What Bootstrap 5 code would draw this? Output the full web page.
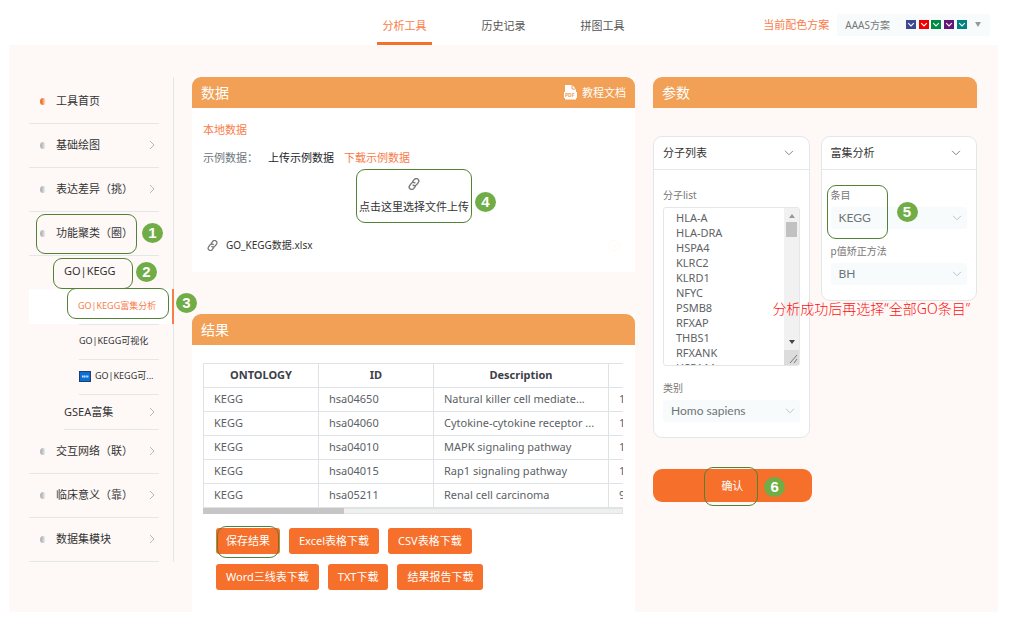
<!DOCTYPE html>
<html lang="zh-CN">
<head>
<meta charset="utf-8">
<meta name="viewport" content="width=device-width, initial-scale=1">
<title>GO|KEGG富集分析</title>
<link rel="stylesheet" href="https://cdn.jsdelivr.net/npm/bootstrap@5.3.0/dist/css/bootstrap.min.css">
<style>
:root{--brand:#f66f2b;--head:#f1a055;--hot:#f97c4a;--line:#e4e7ea;--soft:#f7fbfc;--mark-green:#538135}
body{font-family:"Noto Sans","Noto Sans CJK SC",sans-serif;font-size:11px;line-height:16px;color:#333;background:#fff}
a{color:inherit;text-decoration:none}
.shell{padding:0 12px 15px 9px}
.topbar{display:grid;grid-template-columns:1fr auto 1fr;height:45px}
.topnav{grid-column:2;gap:44px;color:#555}
.topnav a{width:55px;padding-top:18px;text-align:center;border-bottom:3px solid transparent}
.topnav a.active{color:var(--hot);border-color:var(--brand)}
.hot{color:var(--hot)}
.scheme{height:22px;padding:0 9px 0 8px;border:0;background:var(--soft);color:#777;font-size:10px;line-height:16px}
.workspace{display:grid;grid-template-columns:145px minmax(0,443fr) minmax(0,324fr);column-gap:18px;padding:32px 21px 0 20px;background:#fef9f7}
.side{padding-top:3px;border-right:1px solid var(--line);align-self:start}
.side li{margin-right:14px;border-bottom:1px solid var(--line);position:relative;white-space:nowrap}
.side li>a{display:flex;align-items:center;height:43px;padding:0 4px 1px 11px}
.side li>a>span{flex:1}
.dot{width:6px;height:7px;border-radius:50%;margin-right:10px;background:linear-gradient(90deg,#b4b8bc 30%,#fff)}
.dot.on{background:linear-gradient(90deg,#f2702e 30%,#fff)}
.side li.sub1{margin-left:35px}
.side li.sub1>a{height:34px;padding-left:0}
.side li.group{border:0}
.side li.group>a{height:33px;padding-bottom:3px}
.side li.sub2{margin-left:50px;font-size:9px}
.side li.sub2>a{height:34px;padding:0 0 2px}
.side li.current{margin:0 -1px 0 0;border:0;border-right:2px solid var(--hot);background:#fff;font-size:9px;color:var(--hot)}
.side li.current>a{height:35px;padding:0 0 1px 49px}
.side li.current+li{border-top:1px solid var(--line)}
.ring{position:absolute;border:1px solid var(--mark-green);border-radius:9px;pointer-events:none;z-index:2}
.num{position:absolute;width:21px;height:20px;border-radius:50%;background:#70ad47;color:#fff;font:bold 15px/20px "Liberation Sans",sans-serif;text-align:center;z-index:3;pointer-events:none}
.bar{height:31px;padding:0 9px;border-radius:9px 9px 0 0;background:var(--head);color:#fff}
.bar h2{font-size:14px;line-height:20px;font-weight:400;margin:0}
.panel{background:#fff}
.files{height:164px;padding:14px 11px}
.samples{gap:10px;margin-top:12px}
.drop{border:0;background:none;width:116px;height:54px;padding:5px 0;line-height:16px;font-size:11px;color:#333;position:relative;margin:3px 0 0 153px;white-space:nowrap}
.drop svg{display:block;margin:0 auto 9px}
.filerow{margin-top:14px;font-size:10px}
.results{padding:18px 12px 22px 11px}
.results-panel{margin-top:42px;box-shadow:0 -42px #fef9f7}
.sheet{width:521px;table-layout:fixed;margin:0;border-color:#dfe3e8;font-size:11px;line-height:16px}
.sheet>:not(caption)>*>*{padding:3px 10px 4px;white-space:nowrap;color:#5c5f66}
.sheet>thead>tr>th{text-align:center;color:#3c4048;font-weight:700}
.sheet col.term{width:175px}
.sheet col.key{width:115px}
.hscroll{height:6px;background:#eef0f0;border:1px solid #e2e2e2}
.hscroll div{width:141px;height:6px;margin:-1px;background:#c6c6c6}
.downloads{padding:14px 13px 0;column-gap:9px;row-gap:10px;max-width:310px}
.btn-brand{--bs-btn-color:#fff;--bs-btn-bg:var(--brand);--bs-btn-hover-bg:#e8621e;--bs-btn-hover-color:#fff;border:0;padding:5px 10px;font-size:11px;line-height:16px;border-radius:3px;position:relative}
.pcards{display:grid;grid-template-columns:1fr 1fr;column-gap:11px;align-items:start;margin-top:28px;position:relative}
.pcard{border:1px solid var(--line);border-radius:9px;background:#fff;padding-bottom:15px}
.pcard h3{font-size:11px;line-height:16px;font-weight:400;margin:0;padding:8px 15px 8px 9px;border-bottom:1px solid var(--line)}
.fields{padding:17px 9px 0;position:relative}
.fields label{display:block;font-size:10px;line-height:16px;color:#777;margin-bottom:4px}
.fields label.next{margin-top:14px}
.genes{display:block;width:100%;height:159px;padding:2px 16px 0 12px;border:1px solid var(--line);border-radius:3px;resize:none;overflow:hidden;font-size:11px;line-height:15px;color:#606266}
.vs{position:absolute;right:0;top:0}
.pick{appearance:none;width:100%;height:22px;padding:0 8px;border:0;border-radius:3px;background:var(--soft);color:#707478;font-family:Lato,"Noto Sans CJK SC",sans-serif;font-size:12px;line-height:20px}
.pickbox{position:relative}
.pickbox svg{position:absolute;right:5px;top:8px;pointer-events:none}
.confirm{width:49%;height:33px;margin-top:31px;border-radius:9px}
.note{position:absolute;right:7px;top:163px;margin:0;font-size:14px;line-height:20px;font-weight:300;color:#ff1010;white-space:nowrap}
</style>
</head>
<body>
<svg width="0" height="0" class="position-absolute">
<symbol id="right" viewBox="0 0 6 10"><path d="M1 1l4 4-4 4" fill="none" stroke="#b4b8bc"/></symbol>
<symbol id="down" viewBox="0 0 10 6"><path d="M1 .8l4 4 4-4" fill="none" stroke="currentColor"/></symbol>
<symbol id="chain" viewBox="0 0 24 24"><g fill="none" stroke="#777" stroke-width="2.8" stroke-linecap="round" transform="rotate(-8 12 12)"><path d="M10 14a5 5 0 0 0 7.1 0l4-4A5 5 0 0 0 14 3l-4 4"/><path d="M14 10a5 5 0 0 0-7.1 0l-4 4A5 5 0 0 0 10 21l4-4"/></g></symbol>
<symbol id="tick" viewBox="0 0 10 10"><path d="M2.2 3.2L5 6l2.800-2.800" fill="none" stroke="#fff" stroke-width="1.100"/></symbol>
</svg>
<div class="shell container-fluid">
<header class="topbar">
<nav class="topnav d-flex">
<a class="active" href="#">分析工具</a><a href="#">历史记录</a><a href="#">拼图工具</a>
</nav>
<div class="d-flex align-items-center justify-content-end pe-2 pb-1 pt-2">
<span class="hot me-2">当前配色方案</span>
<button class="scheme d-flex align-items-center" type="button">AAAS方案
<svg class="ms-3" width="61" height="10"><g shape-rendering="crispEdges"><rect width="10" height="9" fill="#3b4992"/><rect x="13" width="10" height="9" fill="#ee0000"/><rect x="25" width="10" height="9" fill="#008b45"/><rect x="38" width="10" height="9" fill="#631879"/><rect x="51" width="10" height="9" fill="#008280"/></g><use href="#tick" width="10" height="10"/><use href="#tick" x="13" width="10" height="10"/><use href="#tick" x="25" width="10" height="10"/><use href="#tick" x="38" width="10" height="10"/><use href="#tick" x="51" width="10" height="10"/></svg>
<svg class="ms-2" width="6" height="5"><path d="M0 0h6L3 5z" fill="#999"/></svg></button>
</div>
</header>
<main class="workspace">
<aside class="side">
<ul class="list-unstyled m-0">
<li><a href="#"><i class="dot on"></i><span>工具首页</span></a></li>
<li><a href="#"><i class="dot"></i><span>基础绘图</span><svg width="6" height="10"><use href="#right"/></svg></a></li>
<li><a href="#"><i class="dot"></i><span>表达差异（挑）</span><svg width="6" height="10"><use href="#right"/></svg></a></li>
<li><a href="#"><i class="dot"></i><span>功能聚类（圈）</span></a><div class="ring" style="left:7px;top:2px;width:101px;height:40px"></div><b class="num" style="left:113px;top:11px">1</b></li>
<li class="sub1 group"><a href="#"><span>GO|KEGG</span></a><div class="ring" style="left:-11px;top:2px;width:80px;height:31px"></div><b class="num" style="left:72px;top:6px">2</b></li>
<li class="current"><a href="#"><span>GO|KEGG富集分析</span></a><div class="ring" style="left:38px;top:-1px;width:102px;height:31px"></div><b class="num" style="left:147px;top:4px">3</b></li>
<li class="sub2"><a href="#"><span>GO|KEGG可视化</span></a></li>
<li class="sub2"><a href="#"><svg class="me-1" width="12" height="11"><rect x=".5" y=".5" width="11" height="10" fill="#0b6fd3" stroke="#1e3f66"/><path d="M3 5.500h6.500" stroke="#cfe6ff" stroke-width="2" stroke-dasharray="1.300 .4"/></svg><span>GO|KEGG可...</span></a></li>
<li class="sub1"><a href="#"><span>GSEA富集</span><svg width="6" height="10"><use href="#right"/></svg></a></li>
<li><a href="#"><i class="dot"></i><span>交互网络（联）</span><svg width="6" height="10"><use href="#right"/></svg></a></li>
<li><a href="#"><i class="dot"></i><span>临床意义（靠）</span><svg width="6" height="10"><use href="#right"/></svg></a></li>
<li><a href="#"><i class="dot"></i><span>数据集模块</span><svg width="6" height="10"><use href="#right"/></svg></a></li>
</ul>
</aside>
<div class="d-flex flex-column">
<section class="panel">
<div class="bar d-flex align-items-center justify-content-between"><h2>数据</h2>
<a href="#" class="d-flex align-items-center gap-1"><svg width="15" height="15" viewBox="0 0 15 15"><path d="M2 0h7l4 4v10.500H2z" fill="#fff"/><path d="M9 0v4h4" fill="none" stroke="#f1a055"/><rect x="1" y="7" width="13" height="6" fill="#fff"/><text x="2" y="12" font-size="5" font-weight="bold" fill="#f1a055">PDF</text></svg>教程文档</a></div>
<div class="files">
<div class="hot">本地数据</div>
<div class="samples d-flex"><span class="text-secondary">示例数据：</span><a href="#" class="text-dark">上传示例数据</a><a href="#" class="hot">下载示例数据</a></div>
<button type="button" class="drop"><svg width="12" height="12"><use href="#chain"/></svg>点击这里选择文件上传<span class="ring" style="inset:0"></span><b class="num" style="right:-24px;top:23px">4</b></button>
<div class="filerow d-flex align-items-center"><svg class="ms-1 me-2" width="11" height="11"><use href="#chain"/></svg>GO_KEGG数据.xlsx
<svg class="ms-auto me-1" width="11" height="11" fill="none" stroke="#fff8f4"><circle cx="5.500" cy="5.500" r="5"/><path d="M3 5.500l2 2 3-4"/></svg></div>
</div>
</section>
<section class="panel results-panel flex-grow-1">
<div class="bar d-flex align-items-center"><h2>结果</h2></div>
<div class="results">
<div class="overflow-hidden">
<table class="table table-bordered sheet">
<colgroup><col class="key"><col class="key"><col class="term"><col></colgroup>
<thead><tr><th>ONTOLOGY</th><th>ID</th><th>Description</th><th></th></tr></thead>
<tbody>
<tr><td>KEGG</td><td>hsa04650</td><td>Natural killer cell mediate...</td><td>1</td></tr>
<tr><td>KEGG</td><td>hsa04060</td><td>Cytokine-cytokine receptor ...</td><td>1</td></tr>
<tr><td>KEGG</td><td>hsa04010</td><td>MAPK signaling pathway</td><td>1</td></tr>
<tr><td>KEGG</td><td>hsa04015</td><td>Rap1 signaling pathway</td><td>1</td></tr>
<tr><td>KEGG</td><td>hsa05211</td><td>Renal cell carcinoma</td><td>9</td></tr>
</tbody></table></div>
<div class="hscroll"><div></div></div>
<div class="downloads d-flex flex-wrap">
<button type="button" class="btn btn-brand">保存结果<span class="ring" style="inset:-2px 1px -4px 1px"></span></button>
<button type="button" class="btn btn-brand">Excel表格下载</button>
<button type="button" class="btn btn-brand">CSV表格下载</button>
<button type="button" class="btn btn-brand">Word三线表下载</button>
<button type="button" class="btn btn-brand">TXT下载</button>
<button type="button" class="btn btn-brand">结果报告下载</button>
</div>
</div>
</section>
</div>
<section>
<div class="bar d-flex align-items-center"><h2>参数</h2></div>
<div class="pcards">
<div class="pcard">
<h3 class="d-flex justify-content-between align-items-center">分子列表<svg width="10" height="6" color="#888"><use href="#down"/></svg></h3>
<div class="fields">
<label for="genes">分子list</label>
<div class="position-relative">
<textarea id="genes" class="genes" spellcheck="false">HLA-A
HLA-DRA
HSPA4
KLRC2
KLRD1
NFYC
PSMB8
RFXAP
THBS1
RFXANK
HSPA1A</textarea>
<svg class="vs" width="16" height="159"><rect width="15" height="157" y="1" fill="#f1f1f1"/><path d="M5 11l3-4 3 4z" fill="#999"/><rect x="2" y="15" width="11" height="15" fill="#c1c1c1"/><path d="M5 133h6l-3 4z" fill="#444"/><rect y="143" width="15" height="15" fill="#dcdcdc"/><path d="M6 156l7-8M10 156l3-4" stroke="#777"/></svg>
</div>
<label for="species" class="next">类别</label>
<div class="pickbox"><select id="species" class="pick"><option>Homo sapiens</option></select><svg width="10" height="6" color="#c0c4cc"><use href="#down"/></svg></div>
</div>
</div>
<div class="pcard">
<h3 class="d-flex justify-content-between align-items-center">富集分析<svg width="10" height="6" color="#888"><use href="#down"/></svg></h3>
<div class="fields">
<label for="term">条目</label>
<div class="pickbox"><select id="term" class="pick"><option>KEGG</option></select><svg width="10" height="6" color="#c0c4cc"><use href="#down"/></svg></div>
<label for="padj" class="next">p值矫正方法</label>
<div class="pickbox"><select id="padj" class="pick"><option>BH</option></select><svg width="10" height="6" color="#c0c4cc"><use href="#down"/></svg></div>
<div class="ring" style="left:5px;top:15px;width:61px;height:54px"></div><b class="num" style="left:75px;top:32px">5</b>
</div>
</div>
<p class="note">分析成功后再选择“全部GO条目”</p>
</div>
<button type="button" class="btn btn-brand confirm">确认<span class="ring" style="inset:-2px 34% -4px 32%"></span><b class="num" style="left:70%;top:8px">6</b></button>
</section>
</main>
</div>
<script src="https://cdn.jsdelivr.net/npm/bootstrap@5.3.0/dist/js/bootstrap.bundle.min.js"></script>
</body>
</html>
